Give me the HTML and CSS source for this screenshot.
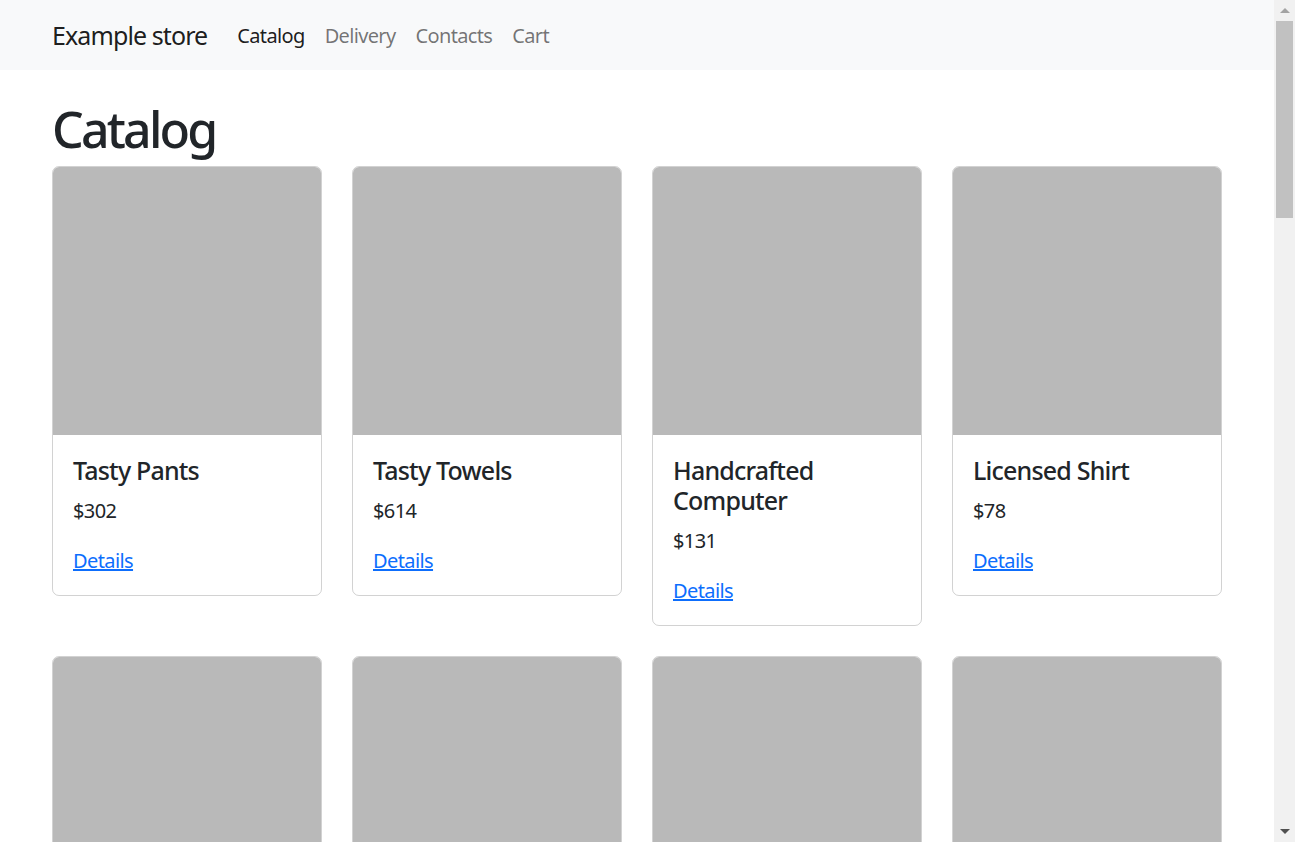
FILE: index.html
```html
<!DOCTYPE html>
<html lang="en">
<head>
<meta charset="utf-8">
<title>Example store</title>
<link rel="stylesheet" href="styles.css">
</head>
<body>
<nav class="navbar">
  <div class="container nav-inner">
    <a class="brand" href="#">Example store</a>
    <ul class="nav-links">
      <li><a class="nav-link active" href="#">Catalog</a></li>
      <li><a class="nav-link" href="#">Delivery</a></li>
      <li><a class="nav-link" href="#">Contacts</a></li>
      <li><a class="nav-link" href="#">Cart</a></li>
    </ul>
  </div>
</nav>
<main class="container main">
  <h1 class="page-title">Catalog</h1>
  <div class="grid">
    <div class="card"><div class="card-img"></div><div class="card-body"><h5 class="card-title">Tasty Pants</h5><p class="price">$302</p><a href="#" class="details">Details</a></div></div>
    <div class="card"><div class="card-img"></div><div class="card-body"><h5 class="card-title">Tasty Towels</h5><p class="price">$614</p><a href="#" class="details">Details</a></div></div>
    <div class="card"><div class="card-img"></div><div class="card-body"><h5 class="card-title">Handcrafted Computer</h5><p class="price">$131</p><a href="#" class="details">Details</a></div></div>
    <div class="card"><div class="card-img"></div><div class="card-body"><h5 class="card-title">Licensed Shirt</h5><p class="price">$78</p><a href="#" class="details">Details</a></div></div>
    <div class="card"><div class="card-img"></div><div class="card-body"><h5 class="card-title">Rustic Chair</h5><p class="price">$455</p><a href="#" class="details">Details</a></div></div>
    <div class="card"><div class="card-img"></div><div class="card-body"><h5 class="card-title">Small Keyboard</h5><p class="price">$219</p><a href="#" class="details">Details</a></div></div>
    <div class="card"><div class="card-img"></div><div class="card-body"><h5 class="card-title">Sleek Gloves</h5><p class="price">$87</p><a href="#" class="details">Details</a></div></div>
    <div class="card"><div class="card-img"></div><div class="card-body"><h5 class="card-title">Generic Hat</h5><p class="price">$640</p><a href="#" class="details">Details</a></div></div>
  </div>
</main>
<div class="scrollbar" aria-hidden="true">
  <div class="sb-btn"><span class="arrow-up"></span></div>
  <div class="sb-thumb"></div>
  <div class="sb-space"></div>
  <div class="sb-btn"><span class="arrow-down"></span></div>
</div>
</body>
</html>
```
FILE: styles.css
```css
html, body {
  margin: 0;
  padding: 0;
}
body {
  font-family: "Noto Sans", "Open Sans", sans-serif;
  font-size: 20px;
  line-height: 1.5;
  color: #212529;
  background: #fff;
  letter-spacing: -0.6px;
}
.container {
  width: 1170px;
  margin-left: 52px;
}
.navbar {
  background: #f8f9fa;
  height: 70px;
  display: flex;
  align-items: center;
}
.nav-inner {
  display: flex;
  align-items: center;
  padding-top: 2px;
}
.brand {
  font-size: 25px;
  line-height: 37.5px;
  color: rgba(0,0,0,.9);
  text-decoration: none;
  margin-right: 20px;
  letter-spacing: -0.9px;
}
.nav-links {
  list-style: none;
  margin: 0;
  padding: 0;
  display: flex;
}
.nav-link {
  display: block;
  padding: 10px;
  color: rgba(0,0,0,.55);
  text-decoration: none;
  letter-spacing: -0.65px;
}
.nav-link.active {
  color: rgba(0,0,0,.9);
}
.main {
  padding-top: 29px;
}
.page-title {
  font-size: 50px;
  font-weight: 500;
  line-height: 60px;
  margin: 0 0 7px;
  letter-spacing: -2.8px;
}
.grid {
  display: grid;
  grid-template-columns: repeat(4, 270px);
  column-gap: 30px;
  row-gap: 30px;
  align-items: start;
}
.card {
  border: 1px solid rgba(0,0,0,.175);
  border-radius: 7px;
  overflow: hidden;
}
.card-img {
  height: 268px;
  background: #b9b9b9;
}
.card-body {
  padding: 20px 20px 19px;
}
.card-title {
  font-size: 25px;
  font-weight: 500;
  line-height: 30px;
  margin: 0 0 11px;
  letter-spacing: -0.8px;
}
.price {
  margin: 0 0 20px;
}
.details {
  color: #0d6efd;
}

/* window scrollbar, drawn over the page edge */
.scrollbar {
  position: fixed;
  top: 0;
  right: 0;
  width: 21px;
  height: 100vh;
  background: #f1f1f1;
  display: flex;
  flex-direction: column;
}
.sb-btn {
  height: 21px;
  display: flex;
  align-items: center;
  justify-content: center;
  flex: none;
}
.sb-thumb {
  height: 197px;
  margin: 0 2px;
  background: #c1c1c1;
  flex: none;
}
.sb-space {
  flex: 1;
}
.arrow-up {
  width: 0;
  height: 0;
  border-left: 5px solid transparent;
  border-right: 5px solid transparent;
  border-bottom: 5px solid #a3a3a3;
}
.arrow-down {
  width: 0;
  height: 0;
  border-left: 5px solid transparent;
  border-right: 5px solid transparent;
  border-top: 5px solid #505050;
}
```
